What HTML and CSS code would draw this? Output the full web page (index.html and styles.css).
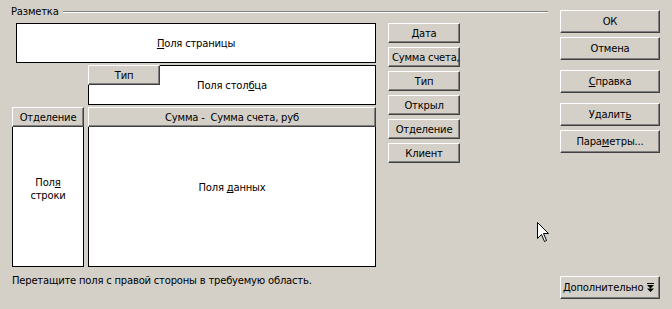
FILE: index.html
```html
<!DOCTYPE html>
<html lang="ru">
<head>
  <meta charset="UTF-8">
  <title>Мастер сводных таблиц - Разметка</title>
  <link rel="stylesheet" href="styles.css">
</head>
<body>
  <div class="dialog">
    <div class="main">
      <div class="group-title">
        <span>Разметка</span>
        <div class="etch"></div>
      </div>

      <div class="layout">
        <div class="diagram">
          <div class="page-area"><span><u>П</u>оля страницы</span></div>

          <div class="col-area">
            <div class="btn col-btn">Тип</div>
            <span class="area-label">Поля стол<u>б</u>ца</span>
          </div>

          <div class="body-area">
            <div class="row-col">
              <div class="btn head-btn">Отделение</div>
              <div class="row-area">Пол<u>я</u><br>строки</div>
            </div>
            <div class="data-col">
              <div class="btn head-btn">Сумма -&nbsp; Сумма счета, руб</div>
              <div class="data-area">Поля <u>д</u>анных</div>
            </div>
          </div>
        </div>

        <!-- список полей справа -->
        <div class="fields">
          <div class="btn field-btn">Дата</div>
          <div class="btn field-btn clip">Сумма счета, руб</div>
          <div class="btn field-btn">Тип</div>
          <div class="btn field-btn">Открыл</div>
          <div class="btn field-btn">Отделение</div>
          <div class="btn field-btn">Клиент</div>
        </div>
      </div>

      <p class="hint">Перетащите поля с правой стороны в требуемую область.</p>
    </div>

    <div class="side">
      <div class="btn side-btn">ОК</div>
      <div class="btn side-btn">Отмена</div>
      <div class="btn side-btn gap"><u>С</u>правка</div>
      <div class="btn side-btn gap">Удалит<u>ь</u></div>
      <div class="btn side-btn">Пара<u>м</u>етры...</div>
      <div class="btn side-btn more">
        <span>Дополнительно</span>
        <svg width="7" height="9" viewBox="0 0 7 9"><path d="M0 0h7v1H0z M0 2h7L3.5 5.5z M0 5.5h7L3.5 9z" fill="#000"/></svg>
      </div>
    </div>
  </div>

  <svg class="cursor" width="13" height="21" viewBox="0 0 13 21">
    <path d="M0.5 0.5 L0.5 16.5 L4.5 12.5 L7.5 19.5 L9.5 18.5 L6.5 11.5 L11.5 11.5 Z" fill="#fff" stroke="#000" stroke-width="1"/>
  </svg>
</body>
</html>
```

FILE: styles.css
```css
body {
  margin: 0;
  background-color: #d4d0c8;
  font-family: "DejaVu Sans", Tahoma, sans-serif;
  font-size: 10px;
  letter-spacing: -0.2px;
  color: #000;
}

u {
  text-decoration: underline;
  text-underline-offset: 1px;
}

.dialog {
  display: flex;
  height: 309px;
  box-sizing: border-box;
}

.main {
  width: 548px;
  display: flex;
  flex-direction: column;
}

.group-title {
  display: flex;
  align-items: center;
  padding: 5px 0 0 11px;
  height: 13px;
  line-height: 13px;
}

.etch {
  flex: 1;
  margin-left: 4px;
  border-top: 1px solid #808080;
  border-bottom: 1px solid #fff;
}

.layout {
  display: flex;
  align-items: flex-start;
  margin-top: 5px;
  padding-left: 12px;
}

.diagram {
  width: 364px;
  display: flex;
  flex-direction: column;
}

.btn {
  box-sizing: border-box;
  background-color: #d4d0c8;
  border: 1px solid;
  border-color: #fff #404040 #404040 #fff;
  box-shadow: inset -1px -1px #808080;
  display: flex;
  align-items: center;
  justify-content: center;
  white-space: nowrap;
  overflow: hidden;
}

.page-area {
  margin-left: 4px;
  height: 40px;
  box-sizing: border-box;
  border: 1px solid #000;
  background: #fff;
  display: flex;
  align-items: center;
  justify-content: center;
}

.col-area {
  margin: 2px 0 0 76px;
  height: 40px;
  box-sizing: border-box;
  border: 1px solid #000;
  background: #fff;
  display: grid;
}

.col-btn,
.area-label {
  grid-area: 1 / 1;
}

.col-btn {
  justify-self: start;
  align-self: start;
  width: 72px;
  height: 20px;
  margin: -1px 0 0 -1px;
}

.area-label {
  place-self: center;
}

.body-area {
  display: flex;
  gap: 4px;
  margin-top: 2px;
}

.row-col {
  width: 72px;
}

.data-col {
  width: 288px;
}

.head-btn {
  height: 20px;
}

.row-area,
.data-area {
  height: 140px;
  box-sizing: border-box;
  border: 1px solid #000;
  border-top: none;
  background: #fff;
  text-align: center;
  line-height: 13px;
}

.row-area {
  padding-top: 49px;
}

.data-area {
  padding-top: 54px;
}

.fields {
  width: 72px;
  margin-left: 12px;
  display: flex;
  flex-direction: column;
  gap: 4px;
}

.field-btn {
  height: 20px;
}

.field-btn.clip {
  justify-content: flex-start;
  padding-left: 3px;
}

.hint {
  margin: 7px 0 0 12px;
  line-height: 13px;
}

.side {
  width: 100px;
  margin-left: 12px;
  padding: 10px 0;
  box-sizing: border-box;
  display: flex;
  flex-direction: column;
  gap: 4px;
}

.side-btn {
  height: 23px;
}

.side-btn.gap {
  margin-top: 6px;
}

.side-btn.more {
  margin-top: auto;
  justify-content: space-between;
  padding: 0 5px 0 2px;
}

.cursor {
  position: absolute;
  left: 537px;
  top: 222px;
}
```
